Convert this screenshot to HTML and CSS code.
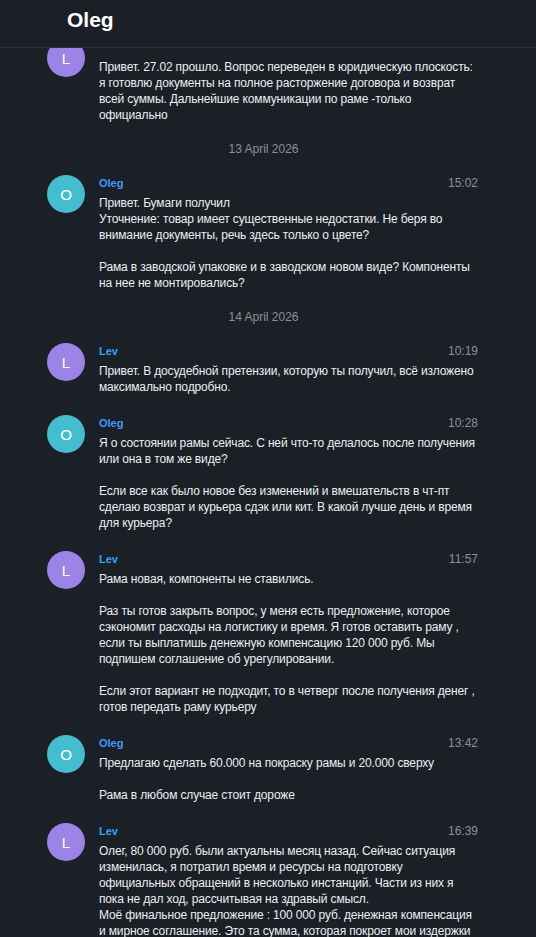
FILE: index.html
```html
<!DOCTYPE html>
<html lang="ru">
<head>
    <meta charset="UTF-8">
    <meta name="viewport" content="width=device-width, initial-scale=1.0">
    <title>Oleg</title>
    <link rel="stylesheet" href="styles.css">
</head>
<body>
    <header class="chat-header">
        <h1>Oleg</h1>
    </header>
    <main class="messages">
        <div class="message-list">
            <div class="message">
                <div class="avatar lev">L</div>
                <div class="message-body">
                    <div class="text first">Привет. 27.02 прошло. Вопрос переведен в юридическую плоскость: я готовлю документы на полное расторжение договора и возврат всей суммы. Дальнейшие коммуникации по раме -только официально</div>
                </div>
            </div>

            <div class="date">13 April 2026</div>

            <div class="message">
                <div class="avatar oleg">O</div>
                <div class="message-body">
                    <div class="meta"><span class="name">Oleg</span><span class="time">15:02</span></div>
                    <div class="text">Привет. Бумаги получил
Уточнение: товар имеет существенные недостатки. Не беря во внимание документы, речь здесь только о цвете?

Рама в заводской упаковке и в заводском новом виде? Компоненты на нее не монтировались?</div>
                </div>
            </div>

            <div class="date">14 April 2026</div>

            <div class="message">
                <div class="avatar lev">L</div>
                <div class="message-body">
                    <div class="meta"><span class="name">Lev</span><span class="time">10:19</span></div>
                    <div class="text">Привет. В досудебной претензии, которую ты получил, всё изложено максимально подробно.</div>
                </div>
            </div>

            <div class="message">
                <div class="avatar oleg">O</div>
                <div class="message-body">
                    <div class="meta"><span class="name">Oleg</span><span class="time">10:28</span></div>
                    <div class="text">Я о состоянии рамы сейчас. С ней что-то делалось после получения или она в том же виде?

Если все как было новое без изменений и вмешательств в чт-пт сделаю возврат и курьера сдэк или кит. В какой лучше день и время для курьера?</div>
                </div>
            </div>

            <div class="message">
                <div class="avatar lev">L</div>
                <div class="message-body">
                    <div class="meta"><span class="name">Lev</span><span class="time">11:57</span></div>
                    <div class="text">Рама новая, компоненты не ставились.

Раз ты готов закрыть вопрос, у меня есть предложение, которое сэкономит расходы на логистику и время. Я готов оставить раму , если ты выплатишь денежную компенсацию 120 000 руб. Мы подпишем соглашение об урегулировании.

Если этот вариант не подходит, то в четверг после получения денег , готов передать раму курьеру</div>
                </div>
            </div>

            <div class="message">
                <div class="avatar oleg">O</div>
                <div class="message-body">
                    <div class="meta"><span class="name">Oleg</span><span class="time">13:42</span></div>
                    <div class="text">Предлагаю сделать 60.000 на покраску рамы и 20.000 сверху

Рама в любом случае стоит дороже</div>
                </div>
            </div>

            <div class="message">
                <div class="avatar lev">L</div>
                <div class="message-body">
                    <div class="meta"><span class="name">Lev</span><span class="time">16:39</span></div>
                    <div class="text">Олег, 80 000 руб. были актуальны месяц назад. Сейчас ситуация изменилась, я потратил время и ресурсы на подготовку официальных обращений в несколько инстанций. Части из них я пока не дал ход, рассчитывая на здравый смысл.
Моё финальное предложение : 100 000 руб. денежная компенсация и мирное соглашение. Это та сумма, которая покроет мои издержки</div>
                </div>
            </div>
        </div>
    </main>
</body>
</html>
```
FILE: styles.css
```css
body {
    margin: 0;
    height: 100vh;
    display: flex;
    flex-direction: column;
    overflow: hidden;
    background: #1b1f26;
    color: #eceef1;
    font-family: "Liberation Sans", Arial, sans-serif;
    font-size: 12px;
}

.chat-header {
    flex-shrink: 0;
    height: 48px;
    box-sizing: border-box;
    padding: 8px 0 0 67px;
    border-bottom: 1px solid #2c3038;
    background: #1b1f26;
    position: relative;
    z-index: 1;
}

.chat-header h1 {
    margin: 0;
    font-size: 21px;
    line-height: 24px;
    font-weight: bold;
    color: #fff;
}

.messages {
    flex: 1;
    overflow: hidden;
}

/* list is scrolled a bit, first message sits under the header */
.message-list {
    margin-top: -19px;
    padding: 0 56px 0 47px;
}

.message {
    display: flex;
    gap: 14px;
    padding: 10px 0;
}

.avatar {
    flex-shrink: 0;
    width: 38px;
    height: 38px;
    border-radius: 50%;
    display: flex;
    align-items: center;
    justify-content: center;
    color: #fff;
    font-size: 15px;
}

.avatar.lev {
    background: #9b84e6;
}

.avatar.oleg {
    background: #45bccf;
}

.message-body {
    flex: 1;
    min-width: 0;
}

.meta {
    display: flex;
    justify-content: space-between;
    line-height: 16px;
    margin-bottom: 4px;
    padding-right: 2px;
}

.name {
    color: #3f9cff;
    font-weight: bold;
    font-size: 11px;
}

.time {
    color: #8b919a;
    font-size: 12px;
}

.text {
    line-height: 16px;
    letter-spacing: -0.15px;
    white-space: pre-line;
}

.text.first {
    margin-top: 20px;
}

.date {
    text-align: center;
    color: #8b919a;
    line-height: 16px;
    padding: 8px 0;
}
```
